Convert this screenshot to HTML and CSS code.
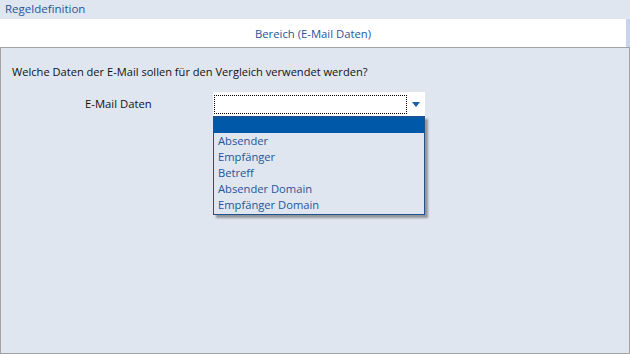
FILE: index.html
```html
<!DOCTYPE html>
<html lang="de">
<head>
    <meta charset="UTF-8">
    <title>Regeldefinition</title>
    <link rel="stylesheet" href="styles.css">
</head>
<body>
    <div class="header">Regeldefinition</div>
    <div class="tabbar">
        <div class="tab">Bereich (E-Mail Daten)</div>
        <div class="tab-edge"></div>
    </div>
    <div class="panel">
        <p class="question">Welche Daten der E-Mail sollen für den Vergleich verwendet werden?</p>
        <div class="field">
            <label class="label">E-Mail Daten</label>
            <div class="combo-wrap">
                <div class="combo">
                    <div class="combo-text"></div>
                    <svg class="arrow" width="8" height="5" viewBox="0 0 8 5"><path d="M0 0H8L4 5Z" fill="#1c5da6"/></svg>
                </div>
                <ul class="dropdown">
                    <li class="selected">&nbsp;</li>
                    <li>Absender</li>
                    <li>Empfänger</li>
                    <li>Betreff</li>
                    <li>Absender Domain</li>
                    <li>Empfänger Domain</li>
                </ul>
            </div>
        </div>
    </div>
</body>
</html>
```

FILE: styles.css
```css
html, body {
    margin: 0;
    height: 100%;
}
body {
    font-family: "Open Sans", "Noto Sans", sans-serif;
    font-size: 11.2px;
    background-color: #dfe6f0;
    display: flex;
    flex-direction: column;
    overflow: hidden;
}
.header {
    height: 19px;
    line-height: 18px;
    padding-left: 5px;
    color: #1f5597;
    font-size: 11.5px;
}
.tabbar {
    display: flex;
    height: 28px;
}
.tab {
    flex: 1;
    background: white;
    color: #1f5597;
    text-align: center;
    line-height: 29px;
    font-size: 11.3px;
}
.tab-edge {
    width: 4px;
    background: #c9d3ee;
}
.panel {
    flex: 1;
    border: 1px solid #a3a3a3;
    padding: 0 11px;
}
.question {
    margin: 16px 0 0;
    color: #111;
    font-size: 11.1px;
}
.field {
    display: flex;
    margin-top: 13px;
}
.label {
    width: 128px;
    padding-left: 73px;
    padding-top: 4px;
    color: #111;
    font-size: 11.3px;
}
.combo-wrap {
    width: 212px;
    position: relative;
}
.combo {
    height: 24px;
    background: white;
    display: flex;
    align-items: center;
}
.combo-text {
    width: 193px;
    height: 19px;
    margin-left: 1px;
    border: 1px dotted #000;
    box-sizing: border-box;
}
.arrow {
    margin-left: 5px;
}
.dropdown {
    position: absolute;
    top: 24px;
    left: 0;
    right: 0;
    margin: 0;
    padding: 0 0 1px;
    list-style: none;
    background: #dfe6f0;
    border: 1px solid #23528a;
    box-shadow: 3px 3px 2px rgba(0,0,0,0.35);
}
.dropdown li {
    height: 16px;
    line-height: 16px;
    padding-left: 4px;
    color: #1f5597;
    font-size: 11.2px;
}
.dropdown li.selected {
    background: #0058a8;
}
```
